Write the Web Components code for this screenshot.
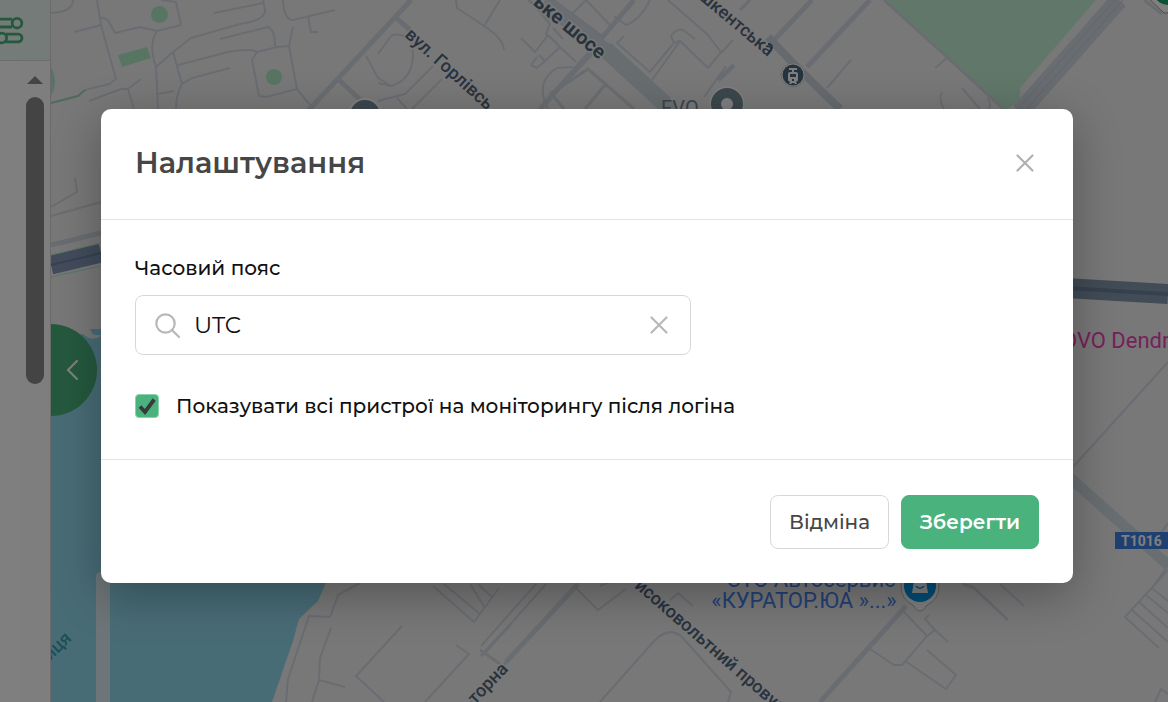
<!DOCTYPE html>
<html lang="uk">
<head>
<meta charset="utf-8">
<meta name="viewport" content="width=device-width, initial-scale=1">
<title>Налаштування</title>
<style>
  html, body { margin: 0; height: 100%; }
  body { font-family: Montserrat, Inter, "Noto Sans", sans-serif; color: #111; overflow: hidden; }
</style>
</head>
<body>
<monitoring-page>
  <side-rail slot="rail"></side-rail>
  <city-map slot="map"></city-map>
  <settings-dialog slot="dialog" heading="Налаштування">
    <search-field label="Часовий пояс" value="UTC"></search-field>
    <check-option checked>Показувати всі пристрої на моніторингу після логіна</check-option>
    <action-button slot="actions">Відміна</action-button>
    <action-button slot="actions" primary>Зберегти</action-button>
  </settings-dialog>
</monitoring-page>

<template id="page-tpl">
  <style>
    :host { display: block; height: 100vh; position: relative; }
    .app { display: grid; grid-template-columns: 51px 1fr; height: 100%; }
    .backdrop { position: absolute; inset: 0; background: rgba(0,0,0,.5); padding: 109px 95px 24px 101px; box-sizing: border-box; overflow: hidden; }
  </style>
  <div class="app"><slot name="rail"></slot><slot name="map"></slot></div>
  <div class="backdrop"><slot name="dialog"></slot></div>
</template>

<template id="rail-tpl">
  <style>
    :host { display: flex; flex-direction: column; box-sizing: border-box; border-right: 1px solid #d4d4d4; background: #fff; min-width: 0; }
    .filter { height: 61px; box-sizing: border-box; border: 0; border-bottom: 1px solid #dadada; background: #ebf7f3; padding: 0; display: flex; align-items: center; }
    .filter svg { display: block; }
    .track { flex: 1; display: flex; flex-direction: column; align-items: center; gap: 13px; align-self: flex-end; width: 30px; padding-top: 15px; box-sizing: border-box; background: #fdfdfd; }
    .up { width: 0; height: 0; border: 8px solid transparent; border-top: 0; border-bottom-color: #888; }
    .thumb { width: 18px; height: 50%; min-height: 80px; max-height: 287px; border-radius: 9px; background: #888; }
  </style>
  <button class="filter" aria-label="Фільтр">
    <svg width="26" height="60" viewBox="0 0 26 60" fill="none" stroke="#4ab27c" stroke-width="2.8">
      <path d="M12 19.2H-4M12 27H-4"/><circle cx="17" cy="23.2" r="4.8"/>
      <circle cx="1.8" cy="38" r="4.8"/><path d="M6 34.2h12.200a3.800 3.800 0 0 1 0 7.600H6"/>
    </svg>
  </button>
  <div class="track"><div class="up"></div><div class="thumb"></div></div>
</template>

<template id="map-tpl">
  <style>
    :host { display: block; position: relative; overflow: hidden; min-width: 0; background: #f1f1f1; }
    svg.map { display: block; width: 100%; height: 100%; }
    .toggle { position: absolute; left: 0; top: 324px; width: 46px; height: 92px; border: 0; padding: 0; background: #4bb27d; border-radius: 0 46px 46px 0; display: grid; place-items: center; }
    .toggle svg { display: block; }
    text { font-family: Roboto, sans-serif; }
    .street { font-size: 18px; font-weight: 500; fill: #51667c; stroke: #f1f1f1; stroke-width: 3px; paint-order: stroke; }
    .wide { font-size: 20px; font-weight: 700; }
    .poi { font-size: 22px; }
  </style>
  <svg class="map" viewBox="51 0 1117 702" preserveAspectRatio="xMinYMin slice">
    <rect x="51" width="1117" height="702" fill="#f1f1f1"/>
    <path fill="#c2efd4" d="M883 0H1096L1020 88V99L1008 109H1002L948 58Z"/>
    <path fill="#b0e8cc" d="M51 67q8 15 0 29Z"/>
    <path fill="#b1eac8" d="M118 55 147 47 151 58 122 67Z"/>
    <circle cx="159.500" cy="14.500" r="8.500" fill="#b1eac8"/><circle cx="274" cy="77" r="8" fill="#b1eac8"/>
    <path fill="#90d9ec" d="M51 340 83 334Q92 342 101 336H140V583H326L318 601 299 619 293 641 282 673 272 702H51Z"/>
    <path fill="#90d9ec" d="M90 329h11v6q-7 1-9-2Z"/>
    <path fill="#dbeaf0" d="M96 577q0-5 5-5h9v130H96Z"/>
    <g fill="none" stroke="#d2d9e3" stroke-width="2" stroke-linejoin="round">
      <path d="M51 13q22-1 22-13M97 0 101 25 74 32M101 17 108 20 115 33 140 27 157 31 181 25 176 2 161 0M101 25 109 54 116 79 109 84 85 90M89 101 121 89 128 89 141 79M128 89 134 109M157 31Q148 44 156 67L158 109M156 67 173 52 191 38 240 24Q266 20 265 10L263 0M173 52 182 84Q176 94 176 109M158 94 174 91M178 65 228 52Q250 48 257 52M182 84 192 78 230 68M220 39 268 27Q275 30 275 46M214 13 263 3M283 0Q284 20 293 20L335 10M308 17 311 32 318 32M293 27 289 46 297 89 310 105M289 46 277 47 257 52 252 60 259 96 266 97 297 89"/>
      <path d="M378 54 391 36Q397 32 410 38L413 52Q414 79 391 86L378 83M366 56 378 78 391 86M378 101 405 94 433 66M397 98 407 109M412 109 442 79M456 0 457 8 484 26Q503 38 504 50M484 26 500 0M521 38 535 52 548 35 560 47 545 61 539 55M545 61 537 68 531 65 537 57M560 47 576 62M530 0 550 24 546 34 558 44M553 28 563 39M586 0 572 14M586 0 610 25M548 109Q534 82 557 68L573 67"/>
      <path d="M614 16 626 25Q640 20 650 0M668 0 707 34 721 52 708 68 680 41M695 39 683 30Q677 28 671 36L674 43 680 41 652 80M624 36 617 43 650 72 673 44M733 40 721 53M704 97 726 66"/>
      <path d="M947 58 935 68M962 88 980 109M942 92Q938 99 944 109M988 98Q992 107 988 109M827 88 851 60"/>
      <path d="M51 207 77 192 75 178M51 216 101 202M360 583 338 595 330 617 309 616 288 679 286 702M331 628 320 658 319 680 312 702M319 680 345 687M402 626 356 676 384 702M456 645 469 654 425 702M433 586 474 622 499 588M444 584 480 614M470 584 485 608M478 584 492 597"/>
      <path d="M481 646 536 584M486 652 546 584M574 586 598 610 626 589M600 586l10-4M670 600 678 593 693 606M600 702 655 640Q670 626 682 637L731 692 728 702M903 611 927 636 902 665 894 665 870 649M927 636 935 630 925 619 929 615M935 630 948 642M927 650 956 675 946 689 905 661"/>
      <path d="M1073 467 1168 362M1160 534 1168 523M1151 590 1168 565M1168 570 1125 617 1159 648M1132 610 1168 642M1139 602 1168 628M1146 595 1168 613M1153 589 1168 601M1155 702 1161 689 1168 694M1000 584 1024 606"/>
      <path d="M963 584 974 588 1008 620" stroke-width="3"/>
    </g>
    <g fill="none" stroke="#d2dae3" stroke-width="5">
      <path d="M411 0 307 112M370 109 337 78M394 16 410 30"/>
      <path d="M540 109 596 50M552 93 588 69 634 109M605 85 585 109M550 92 564 109" stroke-width="3"/>
      <path d="M634 0 606 33 587 56 540 109M718 80 734 65M774 40 812 0M807 67 870 0M820 702 906 606M506 662 578 584"/>
      <path d="M480 650 500 664M470 702 540 625M481 656 510 625M740 10 750 0" stroke-width="3"/>
      <path d="M51 245 101 233"/><path d="M884 0 948 58 1002 108M1144 0 1162 14" stroke-width="3"/>
    </g>
    <path d="M528 0 585 40M553 0 604 38" stroke="#d2dae3" stroke-width="3"/>
    <path d="M545 0 604 48 674 112" stroke="#d4dde4" stroke-width="13" fill="none"/>
    <path d="M605 49 665 104" stroke="#d0dae1" stroke-width="17"/>
    <path d="M1119 0 1020 112" stroke="#d2dae3" stroke-width="18"/>
    <path d="M1115 0 1016 111M1123 0 1025 111" stroke="#c4ccd7" stroke-width="1"/>
    <path d="M1068 476 1168 565" stroke="#d2dce3" stroke-width="11"/>
    <path d="M768 37 790 60 812 82 840 109" stroke="#ccd4dd" stroke-width="8" fill="none"/>
    <path d="M51 265 101 253" stroke="#8599b8" stroke-width="19"/><path d="M51 265 101 253" stroke="#6e83a2" stroke-width="2"/>
    <path d="M51 277 101 266M51 255 101 243" stroke="#b1eac8" stroke-width="1"/>
    <path d="M1065 288 1168 294" stroke="#8599ad" stroke-width="20"/><path d="M1065 288 1168 294" stroke="#6c82a0" stroke-width="4"/>
    <path d="M51 103 78 96 85 90" stroke="#9cd7b8" stroke-width="2" fill="none"/>

    <text class="street" transform="translate(404 36) rotate(42)">вул. Горлівсь</text>
    <text class="street wide" text-anchor="end" transform="translate(599 60) rotate(40)">ьке шосе</text>
    <text class="street" text-anchor="end" transform="translate(768 57) rotate(40)">шкентська</text>
    <text class="street" transform="translate(634 587) rotate(41)">исоковольтний провул</text>
    <text class="street" transform="translate(475 705) rotate(-46)">торна</text>
    <text class="street" style="fill:#3f9cae;stroke:none" transform="translate(50 661) rotate(-44)">иця</text>
    <text class="poi" style="font-size:20px" x="661" y="115" fill="#768b98">EVO</text>
    <text class="poi" text-anchor="middle" fill="#4582ee"><tspan x="811" y="587">СТО Автосервис</tspan><tspan x="804" y="608">«КУРАТОР.ЮА »...»</tspan></text>
    <text class="poi" x="1062" y="348" fill="#ed42b4">OVO Dendr</text>
    <rect x="1115" y="532" width="60" height="17" fill="#4080e4"/>
    <text x="1121" y="546" font-size="14" font-weight="700" fill="#fff">T1016</text>

    <circle cx="727" cy="104" r="17.500" fill="#fff"/><circle cx="727" cy="104" r="16" fill="#788e9c"/><circle cx="727" cy="104" r="6" fill="#fff"/>
    <circle cx="365" cy="115" r="17" fill="#fff"/><circle cx="365" cy="115" r="15" fill="#788e9c"/>
    <circle cx="793" cy="75" r="12" fill="#fff" stroke="#d0d0d0"/><circle cx="793" cy="75" r="10.500" fill="#4d697e"/>
    <path fill="#fff" fill-rule="evenodd" d="M789 68h8v2h-3v2h2q2 0 2 2v6q0 1-2 2l1 2h-2l-1-1h-2l-1 1h-2l1-2q-2-1-2-2v-6q0-2 2-2h2v-2h-3ZM790 74v3h6v-3ZM792 79v2h2v-2Z"/>
    <path d="M768 44q4 0 4 4l-4 6" fill="none" stroke="#516476" stroke-width="2"/>
    <path fill="#fff" stroke="#bbb" d="M920 611q-4 0-6-5-13-7-13-19a19 19 0 0 1 38 0q0 12-13 19-2 5-6 5Z"/>
    <circle cx="920" cy="586" r="16" fill="#0098ee"/>
    <path fill="#fff" fill-rule="evenodd" d="M914 581h12l2 12h-16ZM915 586q5 6 10 0h-2q-3 3-6 0Z"/>
    <path fill="#fff" stroke="#999" d="M1148-2 1164 13H1175V-2Z"/><circle cx="1168" cy="-10" r="15" fill="#14a76c"/>
  </svg>
  <button class="toggle" aria-label="Згорнути панель">
    <svg width="16" height="22" viewBox="0 0 16 22" fill="none" stroke="#fff" stroke-width="2.200" stroke-linecap="round" stroke-linejoin="round"><path d="M11 2 2 11 11 20"/></svg>
  </button>
</template>

<template id="dialog-tpl">
  <style>
    :host { display: block; background: #fff; border-radius: 10px; box-shadow: 0 12px 48px rgba(0,0,0,.3); }
    header { display: flex; justify-content: space-between; align-items: center; height: 111px; padding: 0 34px 2px; box-sizing: border-box; border-bottom: 1px solid #e2e2e2; }
    h2 { margin: 0; font-size: 29px; line-height: 36px; font-weight: 600; color: #464646; }
    .close { border: 0; padding: 0; background: none; width: 28px; height: 28px; display: grid; place-items: center; }
    .body { display: flex; flex-direction: column; gap: 37px; padding: 34px 34px 39px; }
    footer { display: flex; justify-content: flex-end; gap: 12px; padding: 35px 34px 34px; border-top: 1px solid #e2e2e2; }
  </style>
  <section role="dialog" aria-modal="true" aria-labelledby="title">
    <header>
      <h2 id="title"></h2>
      <button class="close" aria-label="Закрити"><svg width="18" height="18" viewBox="0 0 18 18" stroke="#b0b0b0" stroke-width="2.200" stroke-linecap="round"><path d="M1.500 1.500l15 15M16.500 1.500l-15 15"/></svg></button>
    </header>
    <div class="body"><slot></slot></div>
    <footer><slot name="actions"></slot></footer>
  </section>
</template>

<template id="field-tpl">
  <style>
    :host { display: flex; flex-direction: column; gap: 13px; }
    label { font-size: 20px; line-height: 28px; font-weight: 500; }
    .box { display: flex; align-items: center; gap: 13px; max-width: 556px; height: 60px; box-sizing: border-box; border: 1px solid #d8d8d8; border-radius: 8px; padding: 0 18px; }
    input { flex: 1; min-width: 0; border: 0; outline: 0; padding: 0; background: none; font: inherit; font-size: 23px; line-height: 28px; color: #111; }
    button { border: 0; padding: 0; background: none; width: 26px; height: 26px; display: grid; place-items: center; }
    svg { display: block; flex: none; }
  </style>
  <label for="q"></label>
  <div class="box">
    <svg width="27" height="27" viewBox="0 0 27 27" fill="none" stroke="#b8b8b8" stroke-width="2.200" stroke-linecap="round"><circle cx="11.500" cy="11.500" r="9.200"/><path d="M18 18l7 7"/></svg>
    <input id="q" type="text">
    <button aria-label="Очистити"><svg width="18" height="18" viewBox="0 0 18 18" stroke="#b8b8b8" stroke-width="2.200" stroke-linecap="round"><path d="M1.500 1.500l15 15M16.500 1.500l-15 15"/></svg></button>
  </div>
</template>

<template id="check-tpl">
  <style>
    :host { display: block; }
    label { display: flex; align-items: center; gap: 17px; font-size: 20px; line-height: 28px; font-weight: 500; }
    .mark { display: grid; flex: none; }
    .mark > * { grid-area: 1 / 1; }
    input { appearance: none; margin: 0; width: 24px; height: 24px; border-radius: 4px; border: 1px solid #4ab27c; }
    input:checked { background: #4ab27c; border-color: #8fd0ae; }
    input:not(:checked) + svg { visibility: hidden; }
    svg { pointer-events: none; }
  </style>
  <label><span class="mark"><input type="checkbox"><svg width="24" height="24" viewBox="0 0 24 24" fill="none" stroke="#3a3a3a" stroke-width="3.800"><path d="M5 12.500 10 18 19.200 5.500"/></svg></span><span><slot></slot></span></label>
</template>

<template id="button-tpl">
  <style>
    :host { display: block; }
    button { font: inherit; font-size: 20px; line-height: 28px; font-weight: 500; height: 54px; padding: 0 18px; border: 1px solid #d8d8d8; border-radius: 8px; background: #fff; color: #464646; }
    :host([primary]) button { background: #4ab27c; border-color: #4ab27c; color: #fff; font-weight: 600; }
  </style>
  <button type="button"><slot></slot></button>
</template>

<script>
  class TemplateElement extends HTMLElement {
    constructor() {
      super();
      this.attachShadow({ mode: "open" })
        .append(document.getElementById(this.constructor.template).content.cloneNode(true));
    }
  }
  customElements.define("monitoring-page", class extends TemplateElement { static template = "page-tpl"; });
  customElements.define("side-rail", class extends TemplateElement { static template = "rail-tpl"; });
  customElements.define("city-map", class extends TemplateElement { static template = "map-tpl"; });
  customElements.define("settings-dialog", class extends TemplateElement {
    static template = "dialog-tpl";
    connectedCallback() { this.shadowRoot.querySelector("h2").textContent = this.getAttribute("heading"); }
  });
  customElements.define("search-field", class extends TemplateElement {
    static template = "field-tpl";
    connectedCallback() {
      const input = this.shadowRoot.querySelector("input");
      this.shadowRoot.querySelector("label").textContent = this.getAttribute("label");
      input.value = this.getAttribute("value") || "";
      this.shadowRoot.querySelector("button").onclick = () => { input.value = ""; input.focus(); };
    }
  });
  customElements.define("check-option", class extends TemplateElement {
    static template = "check-tpl";
    connectedCallback() { this.shadowRoot.querySelector("input").checked = this.hasAttribute("checked"); }
  });
  customElements.define("action-button", class extends TemplateElement { static template = "button-tpl"; });
</script>
</body>
</html>
